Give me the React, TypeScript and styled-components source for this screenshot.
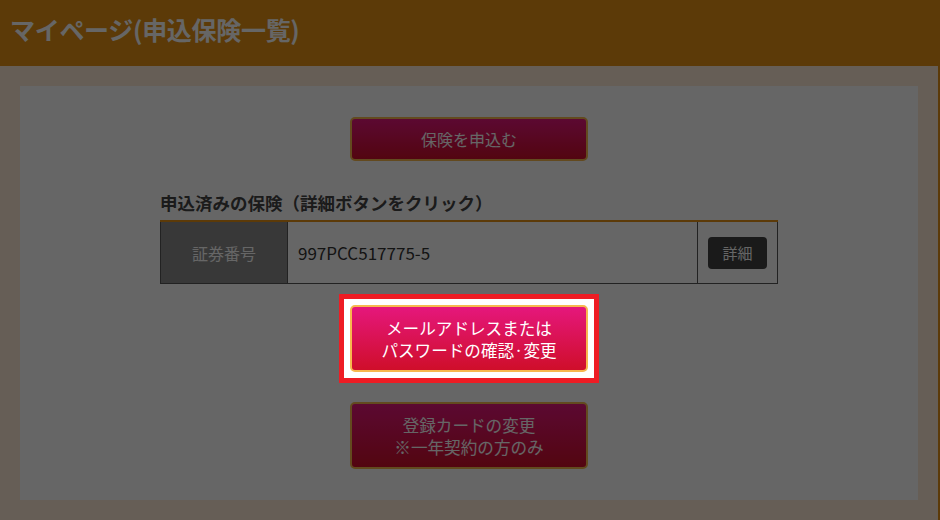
import React from 'react';
import styled, { createGlobalStyle } from 'styled-components';

const GlobalStyle = createGlobalStyle`
    html, body {
        margin: 0;
        padding: 0;
    }
    body {
        background: #ffebd6;
        border-right: 2px solid #e69114;
        min-height: 520px;
        font-family: "Noto Sans CJK JP", "Noto Sans", sans-serif;
        color: #333;
    }
`;

const Header = styled.header`
    height: 66px;
    box-sizing: border-box;
    background: #e69114;
    display: flex;
    align-items: center;
    padding: 0 0 8px 10px;

    h1 {
        margin: 0;
        color: #fff;
        font-size: 25px;
        font-weight: bold;
        letter-spacing: -0.3px;
    }
`;

const Panel = styled.main`
    margin: 20px 20px 0;
    background: #fff;
    padding: 31px 0 31px;
    display: flex;
    flex-direction: column;
    align-items: center;
`;

const PinkButton = styled.button<{ $lines?: number }>`
    width: 238px;
    height: ${(p) => (p.$lines === 2 ? 67 : 44)}px;
    border: 2px solid #f7b84e;
    border-radius: 5px;
    background: linear-gradient(to bottom, #e5177c, #cf0e2a);
    color: #fff;
    font-family: inherit;
    font-size: ${(p) => (p.$lines === 2 ? 16.6 : 16)}px;
    line-height: 22px;
    padding: 0;
    cursor: pointer;
`;

const ListBlock = styled.section`
    width: 618px;
    margin-top: 30px;

    h2 {
        margin: 0 0 5px;
        font-size: 17.5px;
        line-height: 24px;
        font-weight: bold;
        color: #444;
    }
`;

const PolicyTable = styled.table`
    width: 100%;
    border-collapse: collapse;
    border-top: 2px solid #e69114;

    th, td {
        height: 61px;
        border: 1px solid #555;
        border-top: none;
        font-size: 16px;
        padding: 0;
    }

    th {
        width: 126px;
        background: #8c8c8c;
        color: #fff;
        font-weight: normal;
    }

    td.number {
        padding-left: 10px;
        font-size: 17px;
        color: #333;
    }

    td.action {
        width: 79px;
        text-align: center;
    }
`;

const DetailButton = styled.button`
    width: 59px;
    height: 32px;
    border: none;
    border-radius: 4px;
    background: #414141;
    color: #fff;
    font-family: inherit;
    font-size: 15px;
    cursor: pointer;
`;

const Overlay = styled.div`
    position: fixed;
    inset: 0;
    background: rgba(0, 0, 0, 0.6);
    z-index: 10;
`;

const Spotlight = styled.div`
    position: relative;
    z-index: 11;
    margin-top: 10px;
    border: 5px solid #ee1c24;
    background: #fff;
    padding: 6px;
    display: flex;
`;

const BottomButton = styled(PinkButton)`
    margin-top: 19px;
`;

export default function App() {
    return (
        <>
            <GlobalStyle />
            <Header>
                <h1>マイページ(申込保険一覧)</h1>
            </Header>
            <Panel>
                <PinkButton>保険を申込む</PinkButton>
                <ListBlock>
                    <h2>申込済みの保険（詳細ボタンをクリック）</h2>
                    <PolicyTable>
                        <tbody>
                            <tr>
                                <th>証券番号</th>
                                <td className="number">997PCC517775-5</td>
                                <td className="action">
                                    <DetailButton>詳細</DetailButton>
                                </td>
                            </tr>
                        </tbody>
                    </PolicyTable>
                </ListBlock>
                <Spotlight>
                    <PinkButton $lines={2}>
                        メールアドレスまたは
                        <br />
                        パスワードの確認·変更
                    </PinkButton>
                </Spotlight>
                <BottomButton $lines={2}>
                    登録カードの変更
                    <br />
                    ※一年契約の方のみ
                </BottomButton>
            </Panel>
            <Overlay />
        </>
    );
}
